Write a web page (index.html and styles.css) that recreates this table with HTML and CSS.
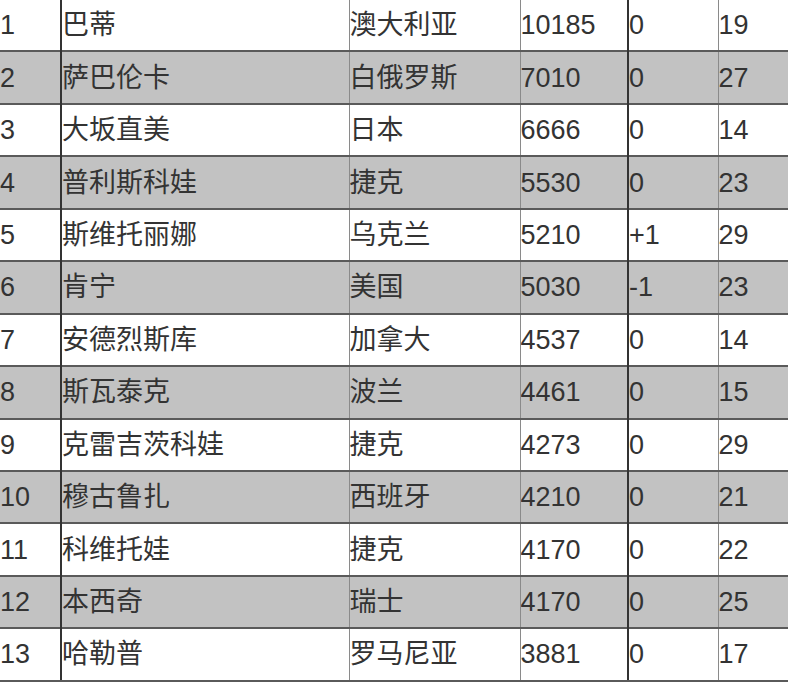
FILE: index.html
```html
<!DOCTYPE html>
<html lang="zh">
<head>
<meta charset="utf-8">
<link rel="stylesheet" href="styles.css">
</head>
<body>
<div class="wrap">
<table class="rank">
<colgroup>
<col class="c1"><col class="c2"><col class="c3"><col class="c4"><col class="c5"><col class="c6">
</colgroup>
<tbody>
<tr><td>1</td><td>巴蒂</td><td>澳大利亚</td><td>10185</td><td>0</td><td>19</td></tr>
<tr class="alt"><td>2</td><td>萨巴伦卡</td><td>白俄罗斯</td><td>7010</td><td>0</td><td>27</td></tr>
<tr><td>3</td><td>大坂直美</td><td>日本</td><td>6666</td><td>0</td><td>14</td></tr>
<tr class="alt"><td>4</td><td>普利斯科娃</td><td>捷克</td><td>5530</td><td>0</td><td>23</td></tr>
<tr><td>5</td><td>斯维托丽娜</td><td>乌克兰</td><td>5210</td><td>+1</td><td>29</td></tr>
<tr class="alt"><td>6</td><td>肯宁</td><td>美国</td><td>5030</td><td>-1</td><td>23</td></tr>
<tr><td>7</td><td>安德烈斯库</td><td>加拿大</td><td>4537</td><td>0</td><td>14</td></tr>
<tr class="alt"><td>8</td><td>斯瓦泰克</td><td>波兰</td><td>4461</td><td>0</td><td>15</td></tr>
<tr><td>9</td><td>克雷吉茨科娃</td><td>捷克</td><td>4273</td><td>0</td><td>29</td></tr>
<tr class="alt"><td>10</td><td>穆古鲁扎</td><td>西班牙</td><td>4210</td><td>0</td><td>21</td></tr>
<tr><td>11</td><td>科维托娃</td><td>捷克</td><td>4170</td><td>0</td><td>22</td></tr>
<tr class="alt"><td>12</td><td>本西奇</td><td>瑞士</td><td>4170</td><td>0</td><td>25</td></tr>
<tr class="last"><td>13</td><td>哈勒普</td><td>罗马尼亚</td><td>3881</td><td>0</td><td>17</td></tr>
</tbody>
</table>
</div>
</body>
</html>
```
FILE: styles.css
```css
html, body {
  margin: 0;
  padding: 0;
  background: #ffffff;
  overflow: hidden;
}
.wrap {
  width: 788px;
  height: 683px;
  overflow: hidden;
}
.rank {
  margin-top: -2px;
  border-collapse: collapse;
  table-layout: fixed;
  width: 830px;
  font-family: "Liberation Sans", Arial, "Noto Sans CJK SC", sans-serif;
  font-size: 27px;
  color: #333333;
}
.c1 { width: 61px; }
.c2 { width: 288px; }
.c3 { width: 171px; }
.c4 { width: 108px; }
.c5 { width: 90px; }
.c6 { width: 112px; }
.rank td {
  height: 52.45px;
  padding: 1px 0 0 0;
  box-sizing: border-box;
  vertical-align: middle;
  border-top: 2px solid #5a5a5a;
  border-left: 1px solid #8a8a8a;
  border-right: 1px solid #8a8a8a;
  white-space: nowrap;
  overflow: hidden;
  line-height: 31px;
}
.rank td:first-child {
  border-left: none;
}
.rank td:nth-child(2),
.rank td:nth-child(5) {
  border-left: 2px solid #333333;
}
.rank tr.alt td {
  background: #c2c2c2;
}
.rank tr.last td {
  border-bottom: 2px solid #5a5a5a;
}
```
